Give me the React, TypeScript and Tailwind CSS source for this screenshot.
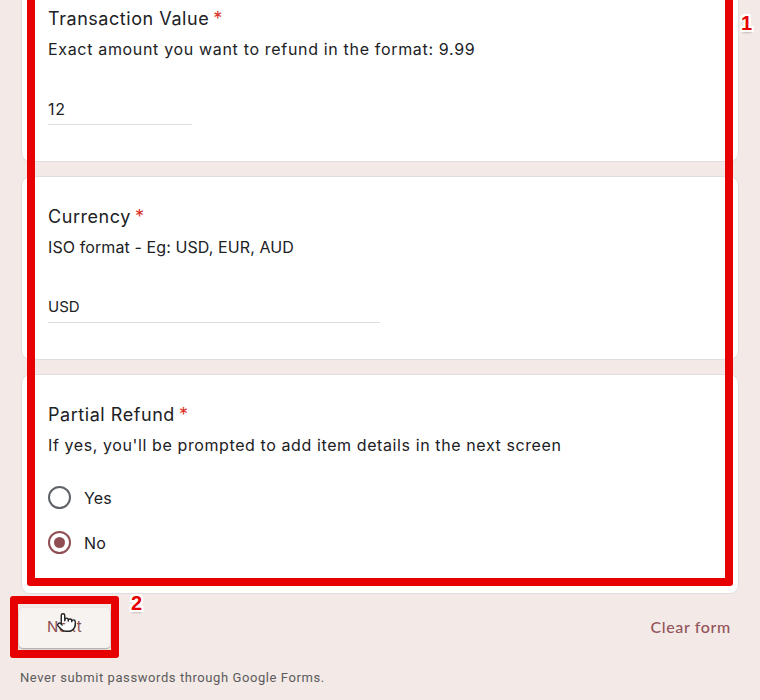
import React from "react";
import { Pointer } from "lucide-react";

const font = "font-['Inter',sans-serif]";

function Title({ text }: { text: string }) {
  return (
    <div className={`${font} flex h-[24px] items-center text-[18px] leading-[24px] tracking-[0.55px] text-[#202124]`}>
      {text}
      <span className="ml-[4px] text-[#d93025]">*</span>
    </div>
  );
}

function Desc({ text, tracking }: { text: string; tracking: string }) {
  return (
    <div className={`${font} mt-[6px] h-[24px] text-[16px] leading-[24px] text-[#202124] ${tracking}`}>{text}</div>
  );
}

function Input({ value, w, type }: { value: string; w: string; type: string }) {
  return (
    <div className={`mt-[36px] h-[28px] border-b border-[#e0dcdc] ${w}`}>
      <div className={`${font} leading-[24px] text-[#202124] ${type}`}>{value}</div>
    </div>
  );
}

function Card({ className, children }: { className: string; children: React.ReactNode }) {
  return (
    <div className={`rounded-[9px] border border-[#e2dcdb] bg-white px-[26px] ${className}`}>{children}</div>
  );
}

function Radio({ checked, label }: { checked?: boolean; label: string }) {
  return (
    <div className="flex h-[45px] items-center gap-[13px]">
      <div
        className={`flex h-[23px] w-[23px] items-center justify-center rounded-full border-2 ${
          checked ? "border-[#8f4e52]" : "border-[#5f6368]"
        }`}
      >
        {checked && <div className="h-[11px] w-[11px] rounded-full bg-[#8f4e52]" />}
      </div>
      <span className={`${font} text-[16px] leading-[24px] tracking-[0.2px] text-[#202124]`}>{label}</span>
    </div>
  );
}

const badge =
  "absolute font-['Liberation_Sans',sans-serif] text-[20px] leading-none font-bold text-[#e60000] [text-shadow:-2px_0_0_white,2px_0_0_white,0_-2px_0_white,0_2px_0_white,-2px_-2px_0_white,2px_2px_0_white,-2px_2px_0_white,2px_-2px_0_white,0_3px_2px_rgba(0,0,0,0.2)]";

export default function App() {
  return (
    <div className="relative h-[700px] w-[760px] overflow-hidden bg-[#f3e9e7]">
      <div className="flex flex-col gap-[14px] px-[21px]">
        <Card className="-mt-[10px] h-[172px] pt-[16px]">
          <Title text="Transaction Value" />
          <Desc text="Exact amount you want to refund in the format: 9.99" tracking="tracking-[0.67px]" />
          <Input value="12" w="w-[144px]" type="text-[16px] tracking-[0.8px]" />
        </Card>
        <Card className="h-[184px] pt-[28px]">
          <Title text="Currency" />
          <Desc text="ISO format - Eg: USD, EUR, AUD" tracking="tracking-[0.1px]" />
          <Input value="USD" w="w-[332px]" type="text-[15px]" />
        </Card>
        <Card className="h-[220px] pt-[28px]">
          <Title text="Partial Refund" />
          <Desc text="If yes, you'll be prompted to add item details in the next screen" tracking="tracking-[0.6px]" />
          <div className="mt-[18px] flex flex-col">
            <Radio label="Yes" />
            <Radio checked label="No" />
          </div>
        </Card>
      </div>

      <div className="mt-[14px] flex h-[40px] items-center justify-between pl-[19px] pr-[29px]">
        <div className="flex h-[40px] w-[91px] items-center justify-center rounded-[4px] bg-[#f6f3f1] shadow-[0_1px_2px_rgba(60,64,67,0.45)]">
          <span className={`${font} -mt-[2px] text-[15px] tracking-[0.5px] text-[#8f4e52]`}>Next</span>
        </div>
        <span className="-mt-[2px] font-['Lato',sans-serif] text-[16px] font-medium tracking-[0.65px] text-[#94545a]">Clear form</span>
      </div>

      <div className="mt-[22px] pl-[20px] font-['Roboto',sans-serif] text-[13px] leading-[16px] tracking-[0.58px] text-[#5b5b5b]">
        Never submit passwords through Google Forms.
      </div>

      <div className="absolute left-[27px] top-[-20px] h-[606px] w-[706px] rounded-[3px] border-[8px] border-[#e60000]" />
      <div className="absolute left-[10px] top-[596px] h-[62px] w-[109px] rounded-[3px] border-[8px] border-[#e60000]" />
      <span className={`${badge} left-[741px] top-[13px]`}>1</span>
      <span className={`${badge} left-[131px] top-[593px]`}>2</span>
      <Pointer className="absolute left-[56px] top-[612px] h-[21px] w-[21px]" fill="white" stroke="#222" strokeWidth={1.6} />
    </div>
  );
}
